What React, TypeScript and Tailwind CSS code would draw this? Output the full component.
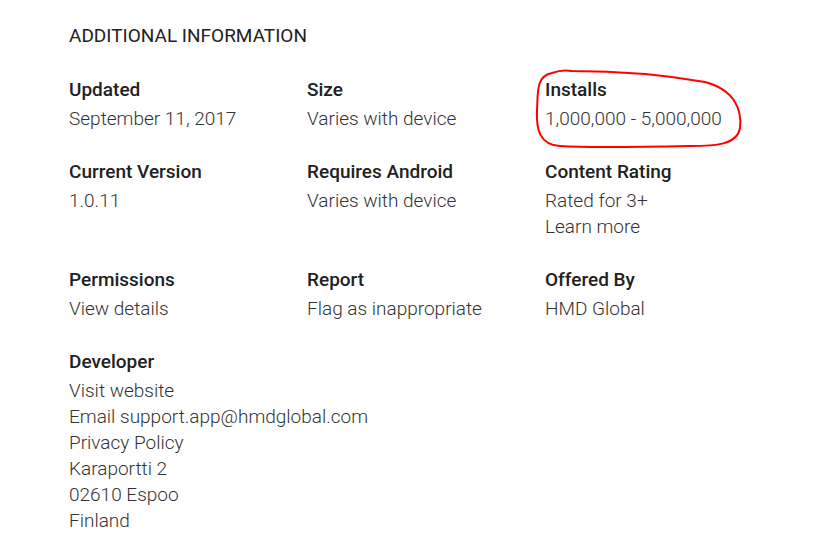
import React from "react";

type Cell = { title: string; values: string[] };

const rows: Cell[][] = [
  [
    { title: "Updated", values: ["September 11, 2017"] },
    { title: "Size", values: ["Varies with device"] },
    { title: "Installs", values: ["1,000,000 - 5,000,000"] },
  ],
  [
    { title: "Current Version", values: ["1.0.11"] },
    { title: "Requires Android", values: ["Varies with device"] },
    { title: "Content Rating", values: ["Rated for 3+", "Learn more"] },
  ],
  [
    { title: "Permissions", values: ["View details"] },
    { title: "Report", values: ["Flag as inappropriate"] },
    { title: "Offered By", values: ["HMD Global"] },
  ],
  [
    {
      title: "Developer",
      values: [
        "Visit website",
        "Email support.app@hmdglobal.com",
        "Privacy Policy",
        "Karaportti 2",
        "02610 Espoo",
        "Finland",
      ],
    },
  ],
];

export default function App() {
  return (
    <div
      className="relative w-[840px] h-[560px] bg-white overflow-hidden"
      style={{ fontFamily: "Roboto, 'Open Sans', sans-serif" }}
    >
      <div className="pl-[69px] pt-[23px]">
        <div className="text-[19px] leading-[26px] text-[#212121] font-normal">
          ADDITIONAL INFORMATION
        </div>
        <div className="mt-[28px] flex flex-col gap-[27px]">
          {rows.map((row, i) => (
            <div key={i} className="grid grid-cols-[238px_238px_238px]">
              {row.map((c) => (
                <div key={c.title} className="flex flex-col whitespace-nowrap">
                  <div className="text-[19px] leading-[26px] font-medium text-[#212121] mb-[3px]">
                    {c.title}
                  </div>
                  {c.values.map((v) => (
                    <div
                      key={v}
                      className="text-[19px] leading-[26px] font-light text-[#333333]"
                    >
                      {v}
                    </div>
                  ))}
                </div>
              ))}
            </div>
          ))}
        </div>
      </div>
      <svg
        className="absolute left-0 top-0 pointer-events-none"
        width="840"
        height="560"
      >
        <path
          d="M552 73 C560 70 566 70 572 71 C610 71 660 74 705 82 C735 90 742 110 740 128 C737 145 715 146 690 146 C640 147 590 148 560 146 C540 145 536 130 537 110 C538 92 536 76 552 73"
          fill="none"
          stroke="#ff0000"
          strokeWidth="2"
        />
      </svg>
    </div>
  );
}
